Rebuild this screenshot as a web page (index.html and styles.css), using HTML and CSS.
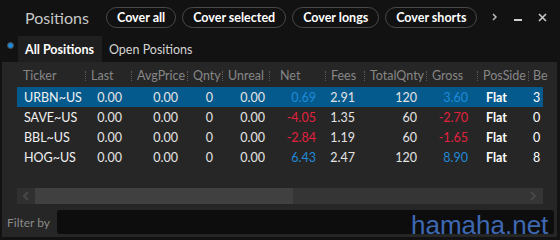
FILE: index.html
```html
<!DOCTYPE html>
<html lang="en">
<head>
    <meta charset="UTF-8">
    <meta name="viewport" content="width=device-width, initial-scale=1.0">
    <title>Positions</title>

    <link rel="stylesheet" href="styles.css">
</head>
<body>
    <div class="titlebar">
        <div class="title">Positions</div>
        <div class="actions">
            <button class="pill">Cover all</button>
            <button class="pill">Cover selected</button>
            <button class="pill">Cover longs</button>
            <button class="pill">Cover shorts</button>
        </div>
        <div class="winctl">
            <svg class="ic-more" width="5" height="8" viewBox="0 0 5 8"><path d="M1 1 L4 4 L1 7" fill="none" stroke="#bdbdbd" stroke-width="1.5"/></svg>
            <svg class="ic-min" width="8" height="8" viewBox="0 0 8 8"><rect x="0" y="6" width="8" height="2" fill="#d0d0d0"/></svg>
            <svg class="ic-close" width="9" height="9" viewBox="0 0 9 9"><path d="M1 1 L8 8 M8 1 L1 8" stroke="#c8c8c8" stroke-width="1.6"/></svg>
        </div>
    </div>

    <div class="tabs">
        <span class="radio"></span>
        <div class="tab active">All Positions</div>
        <div class="tab">Open Positions</div>
    </div>

    <div class="panel">
        <div class="grid">
            <table>
                <colgroup>
                    <col style="width:68px"><col style="width:46px"><col style="width:56px"><col style="width:35px">
                    <col style="width:47px"><col style="width:56px"><col style="width:39px"><col style="width:62px">
                    <col style="width:51px"><col style="width:51px"><col style="width:15px">
                </colgroup>
                <thead>
                    <tr>
                        <th>Ticker</th><th>Last</th><th>AvgPrice</th><th>Qnty</th><th>Unreal</th>
                        <th class="net">Net</th><th>Fees</th><th>TotalQnty</th><th>Gross</th><th>PosSide</th><th class="be">Be</th>
                    </tr>
                </thead>
                <tbody>
                    <tr class="sel">
                        <td class="tk">URBN~US</td><td>0.00</td><td>0.00</td><td>0</td><td class="ur">0.00</td>
                        <td class="pos">0.69</td><td>2.91</td><td>120</td><td class="pos">3.60</td><td class="side">Flat</td><td class="be">3</td>
                    </tr>
                    <tr>
                        <td class="tk">SAVE~US</td><td>0.00</td><td>0.00</td><td>0</td><td class="ur">0.00</td>
                        <td class="neg">-4.05</td><td>1.35</td><td>60</td><td class="neg">-2.70</td><td class="side">Flat</td><td class="be">0</td>
                    </tr>
                    <tr>
                        <td class="tk">BBL~US</td><td>0.00</td><td>0.00</td><td>0</td><td class="ur">0.00</td>
                        <td class="neg">-2.84</td><td>1.19</td><td>60</td><td class="neg">-1.65</td><td class="side">Flat</td><td class="be">0</td>
                    </tr>
                    <tr>
                        <td class="tk">HOG~US</td><td>0.00</td><td>0.00</td><td>0</td><td class="ur">0.00</td>
                        <td class="pos">6.43</td><td>2.47</td><td>120</td><td class="pos">8.90</td><td class="side">Flat</td><td class="be">8</td>
                    </tr>
                </tbody>
            </table>
        </div>

        <div class="hscroll">
            <div class="sb-btn"><svg width="6" height="10" viewBox="0 0 6 10"><path d="M5 1 L1 5 L5 9" fill="none" stroke="#474747" stroke-width="2"/></svg></div>
            <div class="sb-thumb"></div>
            <div class="sb-track"><svg width="6" height="10" viewBox="0 0 6 10"><path d="M1 1 L5 5 L1 9" fill="none" stroke="#474747" stroke-width="2"/></svg></div>
        </div>

        <div class="filter">
            <label for="filterBy">Filter by</label>
            <input type="text" id="filterBy">
        </div>
    </div>

    <div class="watermark">hamaha.net</div>
</body>
</html>
```

FILE: styles.css
```css
body {
    margin: 0;
    width: 560px;
    height: 240px;
    overflow: hidden;
    position: relative;
    background-color: #121212;
    color: #ddd;
    font-family: Lato, "Noto Sans", sans-serif;
}
.titlebar {
    display: flex;
    align-items: center;
    height: 34px;
    padding-left: 25px;
}
.title {
    width: 81px;
    flex-shrink: 0;
    font-size: 16px;
    color: #c8c8c8;
}
.actions {
    display: flex;
    gap: 6px;
}
.pill {
    flex-shrink: 0;
    height: 21px;
    box-sizing: border-box;
    padding: 0 10px;
    border: 1.5px solid #4a4a4a;
    border-radius: 11px;
    background-color: #111;
    color: #fff;
    font-family: inherit;
    font-size: 12.5px;
    font-weight: bold;
    white-space: nowrap;
}
.winctl {
    display: flex;
    align-items: center;
    margin-left: 15px;
}
.ic-min {
    margin-left: 17px;
}
.ic-close {
    margin-left: 16px;
}
.tabs {
    display: flex;
    height: 26px;
    margin-top: 2px;
}
.radio {
    width: 5px;
    height: 5px;
    margin: 6px 4px 0 7px;
    border: 1px solid #4a4a4a;
    border-radius: 50%;
    background-color: #1e88d8;
}
.tab {
    display: flex;
    align-items: center;
    padding: 0 7px;
    font-size: 12.5px;
    color: #d4d4d4;
}
.tab.active {
    padding: 0 8px 0 7px;
    background-color: #1f1f1f;
    color: #fff;
    font-weight: bold;
}
.panel {
    height: 175px;
    margin: 0 3px 0 2px;
    background-color: #262626;
}
.grid {
    width: 526px;
    height: 126px;
    margin-left: 15px;
}
table {
    table-layout: fixed;
    width: 526px;
    border-collapse: collapse;
    font-size: 12.5px;
}
th {
    position: relative;
    height: 25px;
    padding: 2px 0 0 6px;
    box-sizing: border-box;
    text-align: left;
    font-weight: normal;
    color: #868686;
    white-space: nowrap;
}
th + th::before {
    content: "";
    position: absolute;
    left: 0;
    top: 9px;
    height: 10px;
    border-left: 1px dotted #5c5c5c;
}
th.net {
    padding-left: 11px;
}
th.be {
    padding-left: 5px;
}
td {
    height: 20px;
    padding: 0 9px 0 0;
    text-align: right;
    color: #e4e4e4;
    white-space: nowrap;
}
td.tk {
    padding-left: 7px;
    text-align: left;
    color: #f2f2f2;
}
td.ur {
    padding-right: 4px;
}
td.side {
    padding-left: 9px;
    text-align: left;
    color: #fff;
    font-weight: bold;
}
td.be {
    padding: 0 0 0 5px;
    text-align: left;
    color: #fff;
}
.sel td {
    background-color: #045a8d;
}
.pos {
    color: #1f8ad8 !important;
}
.neg {
    color: #e3203d !important;
}
.hscroll {
    display: flex;
    width: 526px;
    height: 16px;
    margin-left: 15px;
}
.sb-btn {
    display: flex;
    align-items: center;
    justify-content: center;
    width: 18px;
    background-color: #303030;
}
.sb-thumb {
    width: 258px;
    background-color: #404040;
}
.sb-track {
    flex: 1;
    display: flex;
    align-items: center;
    justify-content: flex-end;
    padding-right: 7px;
    background-color: #353535;
}
.filter {
    display: flex;
    align-items: center;
    gap: 7px;
    margin-top: 6px;
    padding: 0 3px 0 5px;
}
.filter label {
    font-size: 12px;
    color: #8a8a8a;
}
.filter input {
    flex: 1;
    height: 24px;
    box-sizing: border-box;
    border: none;
    border-radius: 3px;
    background-color: #0d0d0d;
}
.watermark {
    position: absolute;
    left: 411px;
    top: 214px;
    font-family: "Liberation Sans", sans-serif;
    font-size: 26px;
    line-height: 22px;
    color: #3e68b2;
}
```
